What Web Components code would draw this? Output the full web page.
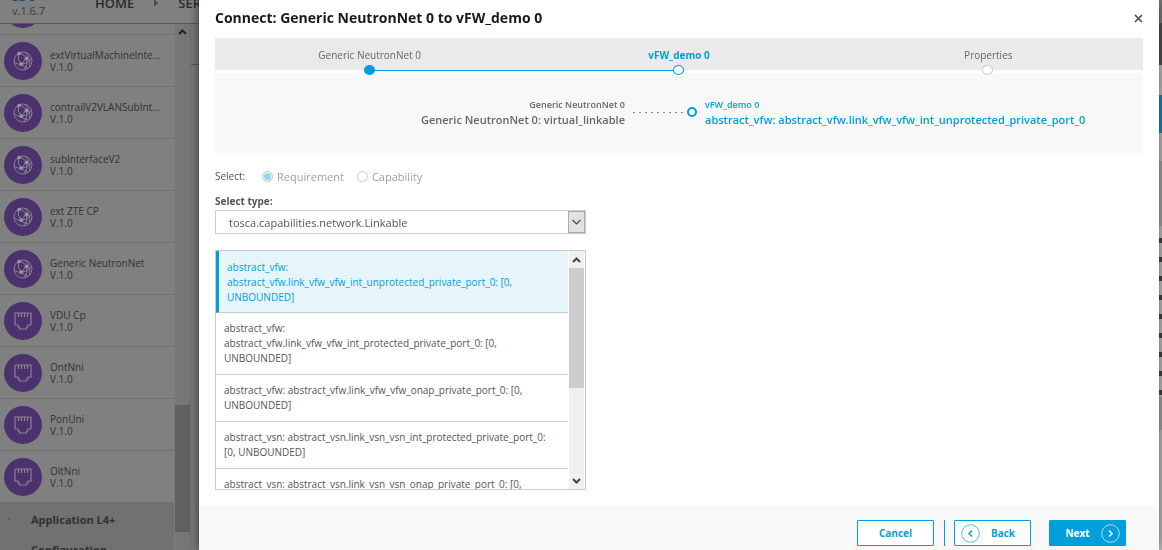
<!DOCTYPE html>
<html lang="en">
<head>
<meta charset="utf-8">
<title>SDC - Connect</title>
<style>
  body { margin: 0; font-family: "Open Sans", sans-serif; font-size: 10px; color: #5a5a5a; }
</style>
</head>
<body>
<sdc-workspace></sdc-workspace>
<sdc-dialog heading="Connect: Generic NeutronNet 0 to vFW_demo 0">
  <step-bar></step-bar>
  <connection-panel></connection-panel>
  <requirement-picker></requirement-picker>
  <wizard-footer slot="footer"></wizard-footer>
</sdc-dialog>

<script>
function define(name, markup) {
  customElements.define(name, class extends HTMLElement {
    constructor() {
      super();
      this.attachShadow({ mode: 'open' });
    }
    connectedCallback() {
      this.shadowRoot.innerHTML = typeof markup === 'function' ? markup(this) : markup;
    }
  });
}

const GLOBE = `<svg viewBox="0 0 20 20" width="20" height="20" fill="none" stroke="#8a8490" stroke-width="1" aria-hidden="true">
  <circle cx="10" cy="10" r="9"/>
  <path d="M6 2 Q11 3 13.500 7 M5.500 3 Q4 8 8 13 M13 7.500 L8.500 13 M14 8 Q15 14 11 19 M1.500 11 Q4 14 8 13 Q14 13 18.500 8 M12 1.500 Q18 7 16.500 16 M8 13 Q10 16 15 17"/>
  <g fill="#9a949f" stroke="none"><circle cx="6" cy="2.500" r="1.800"/><circle cx="13.500" cy="7.500" r="1.900"/><circle cx="8.300" cy="13.200" r="1.900"/></g></svg>`;
const PORT = `<svg viewBox="0 0 18 18" width="18" height="18" fill="none" stroke="#8a8490" stroke-width="1.200" aria-hidden="true">
  <path d="M1 1 H17 V13 H14 V15 H12.500 V17 H5.500 V15 H4 V13 H1 Z M4.500 1 V5 M7.500 1 V5 M10.500 1 V5 M13.500 1 V5"/></svg>`;

define('palette-item', el => `
  <style>
    :host { display: flex; align-items: center; gap: 8px; height: 51px; padding-left: 4px; border-bottom: 1px solid #6f6f6f; flex: none; }
    .icon { display: flex; align-items: center; justify-content: center; flex: none; width: 38px; height: 38px; border-radius: 50%; background: #4b316e; }
    .text { line-height: 12px; padding-top: 1px; color: #323232; white-space: nowrap; }
  </style>
  <span class="icon">${el.getAttribute('icon') === 'port' ? PORT : GLOBE}</span>
  <div class="text"><slot></slot><div>V.1.0</div></div>`);

define('sdc-workspace', `
  <style>
    :host { display: flex; flex-direction: column; position: fixed; inset: 0; overflow: hidden; background: #7b7b7b; }
    header { display: flex; align-items: flex-end; box-sizing: border-box; height: 24px; padding: 0 0 5px 12px; border-bottom: 1px solid #565656; background: #808080; overflow: hidden; flex: none; }
    .brand { width: 83px; font-size: 11px; line-height: 15px; color: #3c3c3c; }
    .brand b { display: block; font-size: 12px; line-height: 12px; color: #12506e; }
    nav { display: flex; align-items: center; gap: 20px; padding-bottom: 5px; font-size: 13px; font-weight: 600; line-height: 20px; }
    nav a { color: #2b2b2b; text-decoration: none; }
    nav i { border: 4px solid transparent; border-left-color: #4a4a4a; border-right-width: 0; }
    main { display: flex; flex: 1; min-height: 0; }
    .palette { width: 174px; overflow: hidden; background: #808080; display: flex; flex-direction: column; }
    .items { margin-top: -41px; flex: none; }
    .groups { flex: 1 0 auto; background: #717171; font-size: 11px; font-weight: 700; color: #303030; }
    .group { display: flex; align-items: center; height: 32px; }
    .group svg { width: 31px; flex: none; }
    .group + .group { height: 28px; }
    .bar { display: flex; flex-direction: column; align-items: center; width: 15px; margin-left: 1px; background: #777; }
    .bar svg { margin-top: 5px; }
    .thumb { width: 15px; height: 127px; margin-top: 370px; background: #616161; }
    .canvas { width: 8px; border-left: 1px solid #6d6d6d; }
    .canvas div { height: 40px; border-bottom: 1px solid #5a5a5a; }
    .side { width: 10px; margin-left: auto; background: #c6c6c6; }
    .side div:nth-child(1) { height: 41px; background: #555; }
    .side div:nth-child(2) { height: 30px; }
    .side div:nth-child(3) { height: 38px; background: #1590c8; }
    .side div:nth-child(4) { height: 28px; }
    .side div:nth-child(5) { height: 65px; background: #a9a9a9; }
    .side div:nth-child(6) { height: 171px; background: repeating-linear-gradient(#c6c6c6 0 12px, #444 12px 17px, #c6c6c6 17px 19px); }
    .side div:nth-child(7) { height: 33px; background: #a9a9a9; }
  </style>
  <header>
    <div class="brand"><b>SDC</b>v.1.6.7</div>
    <nav><a href="#home">HOME</a><i></i><a href="#services">SERVICE</a></nav>
  </header>
  <main>
    <div class="palette">
      <div class="items">
        <palette-item></palette-item>
        <palette-item>extVirtualMachineInte...</palette-item>
        <palette-item>contrailV2VLANSubInt...</palette-item>
        <palette-item>subInterfaceV2</palette-item>
        <palette-item>ext ZTE CP</palette-item>
        <palette-item>Generic NeutronNet</palette-item>
        <palette-item icon="port">VDU Cp</palette-item>
        <palette-item icon="port">OntNni</palette-item>
        <palette-item icon="port">PonUni</palette-item>
        <palette-item icon="port">OltNni</palette-item>
      </div>
      <div class="groups">
        <div class="group"><svg viewBox="0 0 31 8" height="8" fill="none" stroke="#444"><path d="M8 3 L9.500 4.500 L11 3"/></svg>Application L4+</div>
        <div class="group"><svg viewBox="0 0 31 8" height="8"></svg>Configuration</div>
      </div>
    </div>
    <div class="bar"><svg width="9" height="6" viewBox="0 0 9 6" fill="none" stroke="#222" stroke-width="2"><path d="M1 5 L4.500 1.500 L8 5"/></svg><div class="thumb"></div></div>
    <div class="canvas"><div></div></div>
    <div class="side"><div></div><div></div><div></div><div></div><div></div><div></div><div></div></div>
  </main>`);

define('sdc-dialog', el => `
  <style>
    :host { position: relative; display: flex; flex-direction: column; box-sizing: border-box; min-height: 100vh; margin: 0 3px 0 199px; background: #fff; box-shadow: 0 0 10px rgba(0,0,0,.6); }
    header { display: flex; align-items: center; justify-content: space-between; height: 36px; padding: 0 16px 2px; }
    h1 { margin: 0; font-size: 14px; line-height: 20px; font-weight: 700; color: #191919; }
    button { display: flex; padding: 0; border: 0; background: none; }
    section { padding: 0 16px; }
    footer { margin-top: auto; }
  </style>
  <header><h1>${el.getAttribute('heading')}</h1>
    <button aria-label="Close"><svg width="9" height="9" viewBox="0 0 9 9" stroke="#444" stroke-width="1.500"><path d="M1 1 L8 8 M8 1 L1 8"/></svg></button></header>
  <section><slot></slot></section>
  <footer><slot name="footer"></slot></footer>`);

define('step-bar', `
  <style>
    :host { display: block; }
    ol { display: grid; grid-template-columns: repeat(3, 1fr); height: 32px; margin: 0; padding: 0; list-style: none; background: #eaeaea; border-bottom: 3px solid #fff; }
    li { position: relative; padding-top: 10px; text-align: center; line-height: 15px; color: #666; }
    li::after { content: ""; position: absolute; left: 50%; top: 27px; width: 9px; height: 8px; margin-left: -6px; border: 1px solid #ccc; border-radius: 50%; background: #fff; z-index: 1; }
    .done::before { content: ""; position: absolute; left: 50%; top: 32px; width: 100%; height: 1px; background: #009fdb; }
    .done::after { background: #009fdb; border-color: #009fdb; }
    .now { color: #009fdb; font-weight: 700; }
    .now::after { border-color: #009fdb; }
  </style>
  <ol><li class="done">Generic NeutronNet 0</li><li class="now">vFW_demo 0</li><li>Properties</li></ol>`);

define('connection-panel', `
  <style>
    :host { display: grid; grid-template-columns: minmax(0, 410fr) 80px minmax(0, 438fr); align-items: center; box-sizing: border-box; height: 80px; padding-bottom: 2px; background: #f8f8f8; font-weight: 600; white-space: nowrap; }
    .from { text-align: right; color: #666; }
    .to { color: #009fdb; }
    small { display: block; font-size: 9px; line-height: 15px; }
    span { display: block; font-size: 11px; line-height: 16px; }
    .link { display: flex; align-items: center; padding: 0 8px; }
    .link i { flex: 1; height: 1px; background: repeating-linear-gradient(90deg, #888 0 2px, transparent 2px 6px); }
    .link b { width: 6px; height: 6px; border: 2px solid #009fdb; border-radius: 50%; background: #fff; }
  </style>
  <div class="from"><small>Generic NeutronNet 0</small><span>Generic NeutronNet 0: virtual_linkable</span></div>
  <div class="link"><i></i><b></b></div>
  <div class="to"><small>vFW_demo 0</small><span>abstract_vfw: abstract_vfw.link_vfw_vfw_int_unprotected_private_port_0</span></div>`);

define('requirement-picker', `
  <style>
    :host { display: block; width: 371px; padding-top: 13px; color: #555; }
    fieldset { display: flex; align-items: center; height: 20px; margin: 0; padding: 0; border: 0; }
    .caption { width: 47px; }
    label.radio { display: flex; align-items: center; gap: 4px; margin-right: 13px; font-size: 11px; color: #a0a0a0; }
    input { appearance: none; width: 11px; height: 11px; margin: 0; border: 1px solid #ccc; border-radius: 50%; background: #fff; }
    input:checked { background: #91d6f0; box-shadow: inset 0 0 0 1px #fff; }
    .type { display: block; margin-top: 8px; font-weight: 700; line-height: 15px; }
    .drop { position: relative; margin-top: 1px; }
    select { display: block; appearance: none; box-sizing: border-box; width: 100%; height: 24px; padding: 0 24px 0 13px; border: 1px solid #ccc; border-radius: 0; background: #fff; color: #555; font: 11px "Open Sans", sans-serif; }
    .arrow { position: absolute; right: 1px; top: 1px; display: flex; align-items: center; justify-content: center; width: 15px; height: 20px; border: 1px solid #acacac; background: #e1e1e1; pointer-events: none; }
    .list { display: flex; height: 238px; margin-top: 16px; border: 1px solid #ccc; }
    .rows { flex: 1; overflow: hidden; }
    .rows button { display: block; width: 100%; padding: 8px 12px 8px 8px; border: 0; border-bottom: 1px solid #ccc; background: #fff; color: #555; font: 10px/15px "Open Sans", sans-serif; text-align: left; }
    .rows button.on { border-left: 3px solid #009fdb; padding-top: 9px; padding-bottom: 7px; background: #e6f5fb; color: #009fdb; }
    .bar { display: flex; flex-direction: column; width: 15px; margin: 0 1px; background: #f0f0f0; align-items: center; }
    .bar i { width: 15px; height: 120px; background: #cdcdcd; }
    .bar svg { padding: 6px 0 5px; }
    .bar svg:last-child { margin-top: auto; }
  </style>
  <fieldset aria-label="Select">
    <span class="caption">Select:</span>
    <label class="radio"><input type="radio" name="kind" checked disabled>Requirement</label>
    <label class="radio"><input type="radio" name="kind" disabled>Capability</label>
  </fieldset>
  <label class="type" for="type">Select type:</label>
  <div class="drop">
    <select id="type"><option>tosca.capabilities.network.Linkable</option></select>
    <span class="arrow"><svg width="9" height="6" viewBox="0 0 9 6" fill="none" stroke="#444" stroke-width="1.200"><path d="M.500 1 L4.500 5 L8.500 1"/></svg></span>
  </div>
  <div class="list">
    <div class="rows">
      <button class="on">abstract_vfw: abstract_vfw.link_vfw_vfw_int_unprotected_private_port_0: [0, UNBOUNDED]</button>
      <button>abstract_vfw: <br>abstract_vfw.link_vfw_vfw_int_protected_private_port_0: [0, UNBOUNDED]</button>
      <button>abstract_vfw: abstract_vfw.link_vfw_vfw_onap_private_port_0: [0, UNBOUNDED]</button>
      <button>abstract_vsn: abstract_vsn.link_vsn_vsn_int_protected_private_port_0: [0, UNBOUNDED]</button>
      <button>abstract_vsn: abstract_vsn.link_vsn_vsn_onap_private_port_0: [0, UNBOUNDED]</button>
    </div>
    <div class="bar"><svg width="9" height="6" viewBox="0 0 9 6" fill="none" stroke="#444" stroke-width="2"><path d="M1 5 L4.500 1.500 L8 5"/></svg><i></i><svg width="9" height="6" viewBox="0 0 9 6" fill="none" stroke="#444" stroke-width="2"><path d="M1 1 L4.500 4.500 L8 1"/></svg></div>
  </div>`);

define('wizard-footer', `
  <style>
    :host { display: flex; justify-content: flex-end; align-items: center; padding: 14px 33px 4px; background: #f8f8f8; }
    button { display: flex; align-items: center; justify-content: center; box-sizing: border-box; width: 77px; height: 26px; padding: 0; gap: 11px; border: 1px solid #009fdb; border-radius: 1px; background: #fff; color: #009fdb; font: 700 10px "Open Sans", sans-serif; }
    i { width: 1px; height: 26px; margin: 0 9px 0 10px; background: #009fdb; }
    .back { padding-right: 9px; }
    .next { margin-left: 18px; padding-left: 10px; background: #009fdb; color: #fff; }
    svg { flex: none; }
  </style>
  <button>Cancel</button><i></i>
  <button class="back"><svg width="19" height="19" viewBox="0 0 19 19" fill="none" stroke="#009fdb"><circle cx="9.500" cy="9.500" r="8.800" stroke-opacity=".7"/><path stroke-width="1.500" d="M11 6.500 L8 9.500 L11 12.500"/></svg>Back</button>
  <button class="next">Next<svg width="19" height="19" viewBox="0 0 19 19" fill="none" stroke="#fff"><circle cx="9.500" cy="9.500" r="8.800" stroke-opacity=".7"/><path stroke-width="1.500" d="M8 6.500 L11 9.500 L8 12.500"/></svg></button>`);
</script>
</body>
</html>
